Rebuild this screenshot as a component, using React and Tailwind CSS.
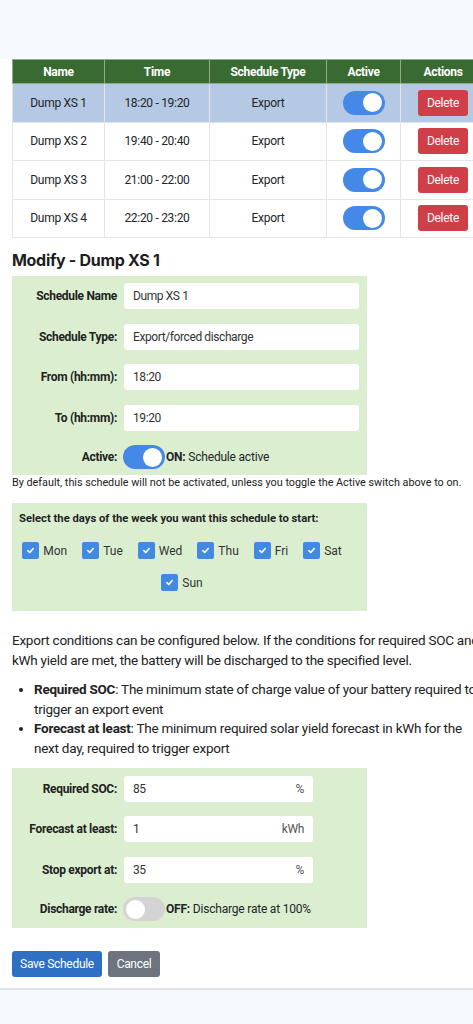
import React from 'react'

const rows = [
  { name: 'Dump XS 1', time: '18:20 - 19:20', selected: true },
  { name: 'Dump XS 2', time: '19:40 - 20:40' },
  { name: 'Dump XS 3', time: '21:00 - 22:00' },
  { name: 'Dump XS 4', time: '22:20 - 23:20' },
]

const days = ['Mon', 'Tue', 'Wed', 'Thu', 'Fri', 'Sat', 'Sun']

/* ---------------- SMALL PARTS ---------------- */
function Toggle({ on }) {
  return (
    <span
      className={`inline-flex items-center w-[42px] h-[24px] rounded-full px-[3px] ${
        on ? 'bg-[#4489e8] justify-end' : 'bg-[#d4d4d4] justify-start'
      }`}
    >
      <span className="w-[19px] h-[19px] rounded-full bg-white" />
    </span>
  )
}

function Check({ label }) {
  return (
    <label className="flex items-center gap-[4px] mr-[15px] h-[17px]">
      <span className="w-[17px] h-[17px] rounded-[2px] bg-[#4289e4] flex items-center justify-center">
        <svg width="9" height="9" viewBox="0 0 10 10">
          <path d="M2 5.2 L4.2 7.2 L8 2.8" stroke="white" strokeWidth="1.8" fill="none" strokeLinecap="round" strokeLinejoin="round" />
        </svg>
      </span>
      <span className="text-[12px] text-[#333]">{label}</span>
    </label>
  )
}

function FormRow({ label, children }) {
  return (
    <div className="flex items-center h-[26px]">
      <div className="w-[105px] shrink-0 text-right text-[12px] tracking-[-0.3px] font-bold text-[#222]">{label}</div>
      <div className="flex-1 pl-[7px] pr-[8px] flex items-center">{children}</div>
    </div>
  )
}

function TextBox({ value, unit, narrow }) {
  return (
    <div
      className={`h-[26px] bg-white rounded-[3px] flex items-center justify-between px-[9px] text-[12px] tracking-[-0.4px] text-[#333] ${
        narrow ? 'w-[189px]' : 'w-full'
      }`}
    >
      <span>{value}</span>
      {unit && <span className="text-[#555]">{unit}</span>}
    </div>
  )
}

/* ---------------- MAIN ---------------- */
export default function App() {
  return (
    <div className="w-[473px] min-h-[1024px] overflow-hidden bg-white text-[#212529] font-['Roboto','Liberation_Sans',sans-serif] flex flex-col">
      <div className="h-[59px] bg-[#f6f9fd] shrink-0" />

      <div className="w-[497px] shrink-0 px-[12px]">
        {/* TABLE */}
        <table className="w-[473px] border-collapse text-[12px] tracking-[-0.3px] text-center table-fixed">
          <colgroup>
            <col className="w-[92px]" />
            <col className="w-[105px]" />
            <col className="w-[117px]" />
            <col className="w-[74px]" />
            <col className="w-[85px]" />
          </colgroup>
          <thead>
            <tr className="bg-[#386a31] text-white font-bold h-[24px]">
              {['Name', 'Time', 'Schedule Type', 'Active', 'Actions'].map((h) => (
                <th key={h} className="border border-[#8fae88] font-bold">{h}</th>
              ))}
            </tr>
          </thead>
          <tbody>
            {rows.map((r) => (
              <tr key={r.name} className={`h-[38.5px] ${r.selected ? 'bg-[#b5c8e4]' : 'bg-white'}`}>
                <td className="border border-[#e3e5e8]">{r.name}</td>
                <td className="border border-[#e3e5e8]">{r.time}</td>
                <td className="border border-[#e3e5e8]">Export</td>
                <td className="border border-[#e3e5e8]">
                  <div className="flex justify-center"><Toggle on /></div>
                </td>
                <td className="border border-[#e3e5e8] text-left pl-[17px]">
                  <button className="bg-[#d03e48] text-white rounded-[3px] h-[26px] w-[50px] text-[12px]">Delete</button>
                </td>
              </tr>
            ))}
          </tbody>
        </table>

        <h2 className="mt-[9px] h-[26px] leading-[26px] text-[16px] font-bold text-[#1d1d1d] font-['Inter','Roboto',sans-serif] tracking-[-0.3px]">
          Modify - Dump XS 1
        </h2>

        {/* SCHEDULE FORM */}
        <div className="mt-[3px] w-[355px] bg-[#dbefd0] pt-[7px] pb-[6px] flex flex-col gap-[14.5px]">
          <FormRow label="Schedule Name"><TextBox value="Dump XS 1" /></FormRow>
          <FormRow label="Schedule Type:"><TextBox value="Export/forced discharge" /></FormRow>
          <FormRow label="From (hh:mm):"><TextBox value="18:20" /></FormRow>
          <FormRow label="To (hh:mm):"><TextBox value="19:20" /></FormRow>
          <div className="flex items-center h-[24px]">
            <div className="w-[105px] shrink-0 text-right text-[12px] tracking-[-0.3px] font-bold text-[#222]">Active:</div>
            <div className="pl-[6px] flex items-center gap-[1px] text-[12px] tracking-[-0.2px]">
              <Toggle on />
              <span><b>ON:</b> Schedule active</span>
            </div>
          </div>
        </div>

        <p className="mt-[1px] text-[10.8px] leading-[14px] text-[#222] whitespace-nowrap">
          By default, this schedule will not be activated, unless you toggle the Active switch above to on.
        </p>

        {/* DAYS */}
        <div className="mt-[13px] w-[355px] h-[108px] bg-[#dbefd0] px-[7px] pt-[8px]">
          <div className="text-[11.25px] font-bold text-[#222] leading-[16px]">
            Select the days of the week you want this schedule to start:
          </div>
          <div className="mt-[15px] flex flex-wrap justify-center gap-y-[15px]">
            {days.map((d) => <Check key={d} label={d} />)}
          </div>
        </div>

        {/* CONDITIONS TEXT */}
        <p className="mt-[19px] text-[13.5px] tracking-[-0.25px] leading-[20px] text-[#222]">
          Export conditions can be configured below. If the conditions for required SOC and kWh yield are met, the battery will be discharged to the specified level.
        </p>
        <ul className="mt-[10px] pl-[22px] list-disc text-[13.5px] tracking-[-0.25px] leading-[19.7px] text-[#222]">
          <li><b>Required SOC</b>: The minimum state of charge value of your battery required to trigger an export event</li>
          <li><b>Forecast at least</b>: The minimum required solar yield forecast in kWh for the next day, required to trigger export</li>
        </ul>

        {/* CONDITIONS FORM */}
        <div className="mt-[9px] w-[355px] bg-[#dbefd0] pt-[8px] pb-[7px] flex flex-col gap-[14.5px]">
          <FormRow label="Required SOC:"><TextBox value="85" unit="%" narrow /></FormRow>
          <FormRow label="Forecast at least:"><TextBox value="1" unit="kWh" narrow /></FormRow>
          <FormRow label="Stop export at:"><TextBox value="35" unit="%" narrow /></FormRow>
          <div className="flex items-center h-[24px]">
            <div className="w-[105px] shrink-0 text-right text-[12px] tracking-[-0.3px] font-bold text-[#222]">Discharge rate:</div>
            <div className="pl-[6px] flex items-center gap-[1px] text-[12px] tracking-[-0.2px]">
              <Toggle />
              <span><b>OFF:</b> Discharge rate at 100%</span>
            </div>
          </div>
        </div>

        {/* BUTTONS */}
        <div className="mt-[23px] flex gap-[6px]">
          <button className="h-[26px] w-[90px] bg-[#2f6fc4] text-white text-[12px] tracking-[-0.3px] rounded-[3px]">Save Schedule</button>
          <button className="h-[26px] w-[52px] bg-[#6c757d] text-white text-[12px] tracking-[-0.3px] rounded-[3px]">Cancel</button>
        </div>
      </div>

      <div className="mt-[11px] flex-1 border-t-2 border-[#e0e2e6] bg-[#f6f9fd]" />
    </div>
  )
}
